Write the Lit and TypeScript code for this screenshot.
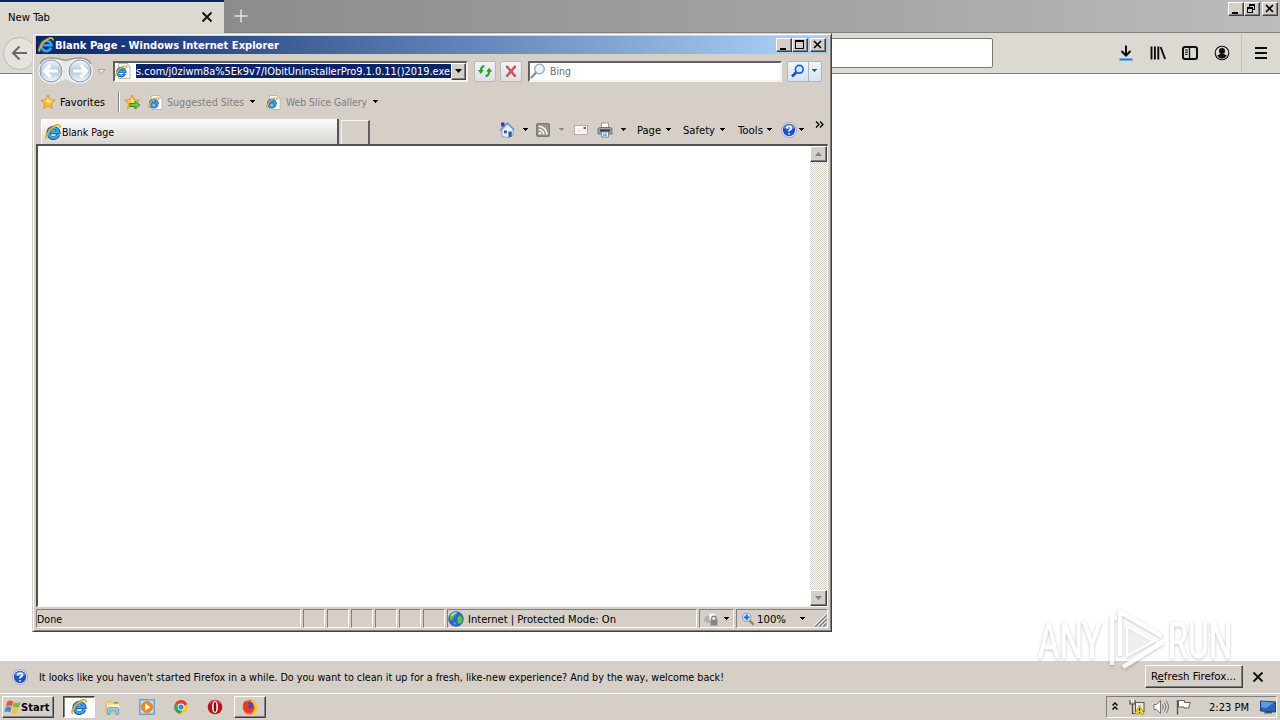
import { LitElement, html, svg, css } from "lit";
import { customElement, property } from "lit/decorators.js";

// One line of UI text, fitted to the width the classic shell font gives it.
@customElement("ui-label")
export class UiLabel extends LitElement {
  @property() text = "";
  @property({ type: Number }) w = 40;
  @property({ type: Number }) key = -1;

  static styles = css`
    :host {
      display: block;
      flex: none;
    }
    svg {
      display: block;
      overflow: visible;
    }
    text {
      font-family: "DejaVu Sans Condensed", "DejaVu Sans", sans-serif;
      font-stretch: condensed;
      font-size: 11px;
      fill: currentColor;
      white-space: pre;
    }
    .key {
      text-decoration: underline;
    }
  `;

  render() {
    const k = this.key;
    const body =
      k < 0
        ? this.text
        : svg`${this.text.slice(0, k)}<tspan class="key">${this.text[k]}</tspan>${this.text.slice(k + 1)}`;
    return html`<svg width=${this.w} height="12">
      <text x="0" y="10" textLength=${this.w} lengthAdjust="spacingAndGlyphs">${body}</text>
    </svg>`;
  }
}

const ieLogo = svg`
  <path d="M13.300 10.800A5.200 5.200 0 1 1 13.600 8.300H5" fill="none" stroke="#1258a8" stroke-width="3.800"/>
  <path d="M13 10.900A5 5 0 1 1 13.400 8.300H5.400" fill="none" stroke="#3fa9ec" stroke-width="2"/>
  <path d="M1.600 14.800C-.6 12 4.500 4.500 9.500 2C13 .2 15.800 .6 15 3.600" fill="none" stroke="#d99a16" stroke-width="1.600"/>
  <path d="M2 14.200C1 11.500 5 5.500 9.500 2.700C12.300 1 14.500 1 14.600 2.600" fill="none" stroke="#ffe25c" stroke-width=".7"/>`;

const star = svg`<path d="M8 1l2.100 4.700 5.100.5-3.900 3.400 1.200 5-4.500-2.700-4.500 2.700 1.200-5L.8 6.200l5.100-.5z" fill="#fdbe35" stroke="#cf8f20" stroke-width=".8"/>
  <path d="M8 3l1.400 3.500 3.600.3-3 2.200-6-2.200 2.600-.3z" fill="#ffe58a"/>`;

const helpBall = svg`
  <circle cx="8" cy="8" r="7.500" fill="#eef2fb" stroke="#8d9cc0" stroke-width=".8"/>
  <circle cx="8" cy="8" r="6.200" fill="#2450b8"/>
  <path d="M3 6A5.300 5.300 0 0 1 13 6Q8 8.500 3 6z" fill="#6f95e2"/>
  <path d="M5.800 6.400Q5.900 4.200 8.100 4.200T10.300 6.200Q10.300 7.400 8.900 8T8.100 9.700M8.100 10.900V12.500" fill="none" stroke="#fff" stroke-width="1.600"/>`;

const pageSheet = svg`
  <path d="M3.500.5h9l2.500 3v12H3.500z" fill="#fff" stroke="#b5b5b5"/>
  <path d="M12 .8v3h3" fill="#e8e8e8" stroke="#b5b5b5" stroke-width=".7"/>
  <g transform="translate(0 2.500) scale(.74)">${ieLogo}</g>`;

const icons: Record<string, unknown> = {
  ie: ieLogo,
  page: pageSheet,
  star,
  starAdd: svg`${star}<path d="M6 9.500h5V7l4.800 4-4.800 4v-2.500H6z" fill="#63d148" stroke="#218a1c" stroke-width=".9"/>`,
  help: helpBall,
  refresh: svg`
    <path d="M7.500 3.200Q4 3 3.900 8" fill="none" stroke="#2b9e2b" stroke-width="2.200"/>
    <path d="M.8 7h6L3.800 11z" fill="#2b9e2b"/>
    <path d="M8.500 13Q12 13 12.100 8" fill="none" stroke="#2b9e2b" stroke-width="2.200"/>
    <path d="M9.200 8.800h6L12.200 4.800z" fill="#2b9e2b"/>`,
  stop: svg`<path d="M3.500 3l9 10.500M12.500 3l-9 10.500" stroke="#a3313a" stroke-width="2.200"/>
    <path d="M3.700 3.200l8.600 10M12.300 3.200l-8.600 10" stroke="#e0606b" stroke-width="1.100"/>`,
  lensGray: svg`<path d="M1 15l5-5.500" stroke="#8a8a8a" stroke-width="2.200"/>
    <circle cx="9.500" cy="6" r="4.800" fill="#e9f3fa" stroke="#9a9fa5" stroke-width="1.300"/>
    <path d="M7 5Q8 3 10 3" stroke="#fff" fill="none"/>`,
  lensBlue: svg`<path d="M2 13.500l4.500-4.500" stroke="#1c4fd0" stroke-width="2.600"/>
    <circle cx="9.300" cy="6.300" r="3.900" fill="#d8ecff" stroke="#1c5fe0" stroke-width="1.700"/>`,
  home: svg`<path d="M3 7.500v7l6 1.200 5-2.200V7L8.500 2z" fill="#e4eefb" stroke="#7891bd" stroke-width=".8"/>
    <path d="M1 8.500L8.500 1l6.800 7" fill="none" stroke="#6e8cc4" stroke-width="1.300"/>
    <path d="M2 .5h3.500v3L2.500 5z" fill="#2a37b8"/>
    <path d="M9.500 9.500h3.200v5l-3.200.8z" fill="#28579a"/><path d="M5 8.500h2.800v2.800H5z" fill="#3d4f70"/>`,
  feed: svg`<rect x="1" y="1" width="14" height="14" rx="2" fill="#7d7b79"/>
    <rect x="2.500" y="2.500" width="11" height="11" rx="1" fill="#9a9896"/>
    <circle cx="5" cy="11.300" r="1.400" fill="#fff"/>
    <path d="M3.700 7.500a5 5 0 0 1 5 5M3.700 4.300a8.200 8.200 0 0 1 8.200 8.200" fill="none" stroke="#fff" stroke-width="1.600"/>`,
  mail: svg`<rect x="1.500" y="3.500" width="13" height="9" fill="#fafafa" stroke="#b0aeac"/>
    <path d="M4 7h4M4 9h6" stroke="#ddd"/><rect x="10.500" y="5" width="2.500" height="2" fill="#d8343c"/>`,
  printer: svg`<path d="M4.500 1h7v5h-7z" fill="#fff" stroke="#888" stroke-width=".8"/>
    <path d="M1 6.500l2-1h10l2 1V12H1z" fill="#a2a5a8" stroke="#666" stroke-width=".8"/>
    <path d="M3 7.500h10v2H3z" fill="#30353a"/>
    <path d="M4.500 10h7v5h-7z" fill="#f4fbff" stroke="#5c7589" stroke-width=".8"/><path d="M6 11.500h4v2.500H6z" fill="#6fb7d8"/>`,
  globe: svg`<circle cx="8" cy="8" r="7.300" fill="#2b67cf" stroke="#234c8e" stroke-width=".7"/>
    <path d="M3 3Q6 .5 8 2.500L7 5 4.500 7 5 9.500 2 8.500Q1 6 3 3zM9.500 6l3-1.500 2.200 3-.7 3.500-3 2.500-1.500-3zM5 11l3 1-1 2.500z" fill="#55c544"/>
    <path d="M3.500 5Q5 1.500 9 2" fill="none" stroke="#b9e3ff" stroke-width="1.200"/>`,
  privacy: svg`<path d="M.5 9Q4 3.500 8 3l-1 9Q3 12 .5 9z" fill="#b3b1af"/>
    <path d="M5.500 3l5-1 3 3-6 6z" fill="#fff" stroke="#ccc" stroke-width=".6"/>
    <path d="M8.700 9V7.500a2.300 2.300 0 0 1 4.600 0V9" fill="none" stroke="#777" stroke-width="1.200"/>
    <rect x="7.500" y="9" width="7" height="5.500" fill="#858585"/>`,
  zoom: svg`<path d="M9.500 9.500l5 5" stroke="#b47a4a" stroke-width="2.600"/>
    <circle cx="6.500" cy="6" r="4.900" fill="#cfe6fb" stroke="#6e9ed6" stroke-width="1.100"/>
    <path d="M6.500 2.800v6.400M3.300 6h6.400" stroke="#1763c9" stroke-width="2"/>`,
  explorer: svg`<path d="M1 2.500h5l1.500 1.500H14v10H1z" fill="#f2d675" stroke="#d3b45a" stroke-width=".8"/>
    <path d="M2 5.500h12.500v4H2z" fill="#fdf2b8"/><path d="M9 3h4v1.500H9z" fill="#5aa95a"/>
    <path d="M2.500 15.500V9.500q0-1 1-1h9q1 0 1 1v6H11v-3.500H5v3.500z" fill="#8fcaec" stroke="#4f9ac8" stroke-width=".7"/>`,
  player: svg`<rect x=".7" y=".7" width="14.600" height="14.600" fill="#a8cdee" stroke="#5a92ca"/>
    <rect x="2.500" y="2.500" width="11" height="11" fill="#dcebf8"/>
    <circle cx="8" cy="8" r="5.600" fill="#f28a14" stroke="#d46c05" stroke-width=".6"/><path d="M6.200 4.600v6.800L11.300 8z" fill="#fff"/>`,
  chrome: svg`<circle cx="8" cy="8" r="6.800" fill="#fbc926"/>
    <path d="M8 8L2.100 4.600A6.800 6.800 0 0 1 14.300 5.200z" fill="#e03f34"/>
    <path d="M8 8L2.100 4.600A6.800 6.800 0 0 0 7.500 14.800L10.500 9.500z" fill="#35a352"/>
    <circle cx="8" cy="8" r="3.400" fill="#fff"/><circle cx="8" cy="8" r="2.600" fill="#4182e8"/>`,
  opera: svg`<circle cx="8" cy="8" r="7.300" fill="#b81420"/><path d="M2.500 4.500Q8-1.500 13.500 4.500" fill="none" stroke="#e36b6b"/>
    <ellipse cx="8" cy="8" rx="3" ry="5.900" fill="#fff"/><ellipse cx="8" cy="8" rx="1.400" ry="4.900" fill="#8c0c15"/>`,
  firefox: svg`<circle cx="8" cy="8.200" r="7.400" fill="#f7641e"/>
    <path d="M8.500 .3Q15.800 3 15.400 9T9.500 15.500Q13.500 10 8.500 .3z" fill="#ffc928"/>
    <circle cx="7.800" cy="7" r="4" fill="#4a48c0"/>
    <path d="M.8 6Q1.500 3 3.500 1.500L4.500 4l3.500 1.500-2.500 2Q5.500 10 9 9.500q3-1 2.800-3Q14 10 10.500 12.500T3 12.500Q.4 9.500 .8 6z" fill="#f5361f"/>`,
  network: svg`<path d="M1 1v4h5V1M3.500 5v9.500H8" fill="none" stroke="#4a4a4a" stroke-width="1.200"/>
    <path d="M2.300 0v3M4.700 0v3" stroke="#fff"/><rect x="6.500" y="3.500" width="8.500" height="9" fill="#eee" stroke="#555"/>
    <path d="M10.500 6l4.700 9H5.800z" fill="#fbd32a" stroke="#a88712" stroke-width=".7"/><path d="M10.500 9v3M10.500 13v1" stroke="#222" stroke-width="1.200"/>`,
  sound: svg`<path d="M1 5.500h2.500l4-4v13l-4-4H1z" fill="#fff" stroke="#666" stroke-width=".9"/>
    <path d="M9.500 5.500q1.500 2.500 0 5M11.500 3.700q3 4.300 0 8.600M13.500 2q4 6 0 12" fill="none" stroke="#777" stroke-width="1"/>`,
  flag: svg`<path d="M1.500 15.500V1" stroke="#555" stroke-width="1.400"/><path d="M2.500 1.500h6v2h6l-1.500 3 0 2.500H8V8H2.500z" fill="#fff" stroke="#555" stroke-width=".9"/>`,
  monitor: svg`<path d="M.5 2l15 1v10l-15-1z" fill="#2a63bd" stroke="#153f82"/><path d="M1 2.500l13 1L6 9l-5-1z" fill="#5c9ae3"/><path d="M5 13h7v1.500H3.500z" fill="#44536c"/>`,
  windows: svg`<path d="M3 2.500Q6 .5 8.500 2.500L7.300 7Q5 5.300 1.800 7z" fill="#e9532b"/>
    <path d="M9.300 3Q12 4.500 15.500 2.800L14.200 7.500Q11.500 8.700 8.200 7.300z" fill="#7cb83c"/>
    <path d="M1.500 8Q4.500 6.300 7 8L5.700 12.700Q3 11 .3 12.700z" fill="#3b86d8"/>
    <path d="M7.900 8.400Q11 10 14 8.600L12.700 13.200Q9.500 14.700 6.600 13z" fill="#f7c32c"/>`,
  download: svg`<path d="M8 .5v9.500M3.500 6L8 10.500 12.500 6" fill="none" stroke="#0c0c0d" stroke-width="2"/><path d="M1.500 14.500h13" stroke="#0a7fe8" stroke-width="2"/>`,
  library: svg`<path d="M1.500 1.500v13M4.900 1.500v13M8.300 1.500v13M10.600 2l4.500 12" stroke="#0c0c0d" stroke-width="1.900"/>`,
  sidebar: svg`<rect x="1" y="2" width="14" height="12" rx="2" fill="none" stroke="#0c0c0d" stroke-width="2"/>
    <path d="M7.500 2v12" stroke="#0c0c0d" stroke-width="1.300"/><path d="M3 5h3M3 7.200h3M3 9.400h2.500" stroke="#0c0c0d"/>`,
  account: svg`<circle cx="8" cy="8" r="6.800" fill="none" stroke="#0c0c0d" stroke-width="1.100"/>
    <circle cx="8" cy="6" r="3" fill="#0c0c0d"/><path d="M3.200 10.500Q5 9.500 6 9h4q1 .5 2.800 1.500Q11 13.600 8 13.600T3.200 10.500z" fill="#0c0c0d"/>`,
  menu: svg`<path d="M2 3h12M2 8h12M2 13h12" stroke="#0c0c0d" stroke-width="2"/>`,
  cross: svg`<path d="M3.500 3.500l9 9M12.500 3.500l-9 9" stroke="#111" stroke-width="1.900"/>`,
  plus: svg`<path d="M8 1.500v13M1.500 8h13" stroke="#e4e4e4" stroke-width="1.500"/>`,
  chevrons: svg`<path d="M5.500 6.500L8 4l2.500 2.500M5.500 10.500L8 8l2.500 2.500" fill="none" stroke="#000" stroke-width="1.400"/>`,
};

const icon = (name: string, size = 16) =>
  html`<svg class="icon" width=${size} height=${size} viewBox="0 0 16 16">${icons[name]}</svg>`;

const arrow = (tone = "#000") =>
  html`<svg class="icon" width="6" height="4" shape-rendering="crispEdges"><path d="M0 0h5L2.500 3z" fill=${tone}/></svg>`;

const label = (text: string, w: number) => html`<ui-label .text=${text} .w=${w}></ui-label>`;

const captionGlyphs: Record<string, unknown> = {
  min: svg`<path d="M3 9h6v2H3z"/>`,
  max: svg`<path fill-rule="evenodd" d="M2 1h9v9H2zM3 3v6h7V3z"/>`,
  restore: svg`<path fill-rule="evenodd" d="M4 1h6v6H8v3H2V4h2zM5 3v1h3v2h1V3zM3 6v3h4V6z"/>`,
  close: svg`<path d="M3 2l7 7M10 2L3 9" stroke="#000" stroke-width="1.600"/>`,
};

const captionButtons = (middle: string) => html`
  <div class="caption">
    ${["min", middle, "close"].map(
      (n) => html`<div class="cap raised ${n}"><svg width="12" height="11">${captionGlyphs[n]}</svg></div>`
    )}
  </div>
`;

@customElement("app-root")
export class AppRoot extends LitElement {
  static styles = css`
    :host {
      --face: #d5cfc8;
      display: block;
      width: 1280px;
      height: 720px;
      overflow: hidden;
      position: relative;
      background: #fff;
      color: #000;
      font: 11px "DejaVu Sans Condensed", "DejaVu Sans", sans-serif;
    }
    * {
      box-sizing: border-box;
    }
    .icon {
      display: block;
      flex: none;
    }
    .raised {
      background: var(--face);
      border: 1px solid;
      border-color: #fff #404040 #404040 #fff;
      box-shadow: inset -1px -1px #808080;
    }
    .sunken {
      border: 1px solid;
      border-color: #808080 #fff #fff #808080;
    }
    .caption {
      display: flex;
    }
    .cap {
      width: 16px;
      height: 14px;
    }
    .cap svg {
      display: block;
    }
    .cap.close {
      margin-left: 2px;
    }

    /* Firefox */
    .firefox {
      display: flex;
      flex-direction: column;
      height: 693px;
    }
    .tabstrip {
      display: flex;
      height: 33px;
      background: linear-gradient(90deg, #808080, #8c8c8c 18%, #a4a4a4 65%, #bcbcbc);
    }
    .fx-tab {
      width: 224px;
      height: 33px;
      border-top: 2px solid #0a246a;
      background: #dcd8d2;
      display: flex;
      align-items: center;
      justify-content: space-between;
      padding: 0 9px 2px 8px;
    }
    .new-tab {
      margin: 8px 0 0 9px;
      flex: 1;
    }
    .tabstrip .caption {
      padding: 2px 2px 0 0;
    }
    .strip-rest {
      flex: 1;
      display: flex;
      border-bottom: 1px solid #808080;
    }
    .fx-bar {
      height: 41px;
      background: #dcd8d2;
      border-bottom: 1px solid #808080;
      display: flex;
      align-items: center;
    }
    .fx-back {
      width: 33px;
      height: 33px;
      margin-left: 3px;
      border: 1px solid #bdb9b3;
      border-radius: 50%;
      background: #e6e3de;
      display: grid;
      place-items: center;
    }
    .fx-url {
      width: 920px;
      height: 30px;
      margin: 0 125px 0 37px;
      border: 1px solid #777;
      border-radius: 2px;
      background: #fff;
    }
    .fx-icons {
      display: flex;
      gap: 16px;
    }
    .fx-sep {
      width: 1px;
      height: 38px;
      margin: 0 11px;
      background: #c6c2bc;
    }
    .fx-page {
      flex: 1;
    }
    .notice {
      height: 32px;
      background: var(--face);
      display: flex;
      align-items: center;
      padding: 0 14px 0 12px;
    }
    .notice ui-label {
      margin-left: 11px;
    }
    .notice button {
      width: 98px;
      height: 23px;
      margin: 0 7px 2px auto;
      padding: 0;
      display: grid;
      place-items: center;
    }
    .notice button ui-label {
      margin: 0 2px 0 0;
    }

    /* Taskbar */
    .taskbar {
      height: 27px;
      background: var(--face);
      border-top: 1px solid #fff;
      display: flex;
      align-items: center;
      padding: 1px 3px 1px 2px;
    }
    .start {
      width: 52px;
      height: 22px;
      display: flex;
      align-items: center;
      padding-left: 1px;
    }
    .start span {
      font: bold 11px "DejaVu Sans Condensed", "DejaVu Sans", sans-serif;
      font-stretch: condensed;
      letter-spacing: 0.1px;
    }
    .task {
      width: 32px;
      height: 22px;
      display: grid;
      place-items: center;
    }
    .task.pressed {
      margin-left: 9px;
      background: #fff;
      border: 1px solid;
      border-color: #404040 #fff #fff #404040;
      box-shadow: inset 1px 1px #808080;
    }
    .pins {
      display: flex;
      gap: 18px;
      margin: 0 11px 0 10px;
    }
    .tray {
      width: 171px;
      height: 22px;
      margin-left: auto;
      display: flex;
      align-items: center;
    }
    .tray .icon:nth-of-type(2) {
      margin-left: 6px;
    }
    .tray .icon:nth-of-type(3) {
      margin: 0 7px 0 8px;
    }
    .tray ui-label {
      margin: 0 11px 0 17px;
    }

    /* Internet Explorer window, floating over Firefox */
    .ie {
      position: absolute;
      left: 32px;
      top: 33px;
      width: 800px;
      height: 599px;
      padding: 2px 3px 2px 3px;
      background: var(--face);
      border: 1px solid;
      border-color: var(--face) #404040 #404040 var(--face);
      box-shadow: inset 1px 1px #fff, inset -1px -1px #808080;
      display: flex;
      flex-direction: column;
    }
    .ie-title {
      flex: none;
      height: 18px;
      display: flex;
      align-items: center;
      padding: 0 2px;
      background: linear-gradient(90deg, #0a246a, #a6caf0 94%);
    }
    .ie-title text {
      font: bold 11px "DejaVu Sans Condensed", "DejaVu Sans", sans-serif;
      fill: #fff;
    }
    .ie-title .name {
      margin-left: 1px;
      flex: 1;
    }
    .nav {
      flex: none;
      height: 34px;
      display: flex;
      align-items: center;
      padding-left: 1px;
    }
    .address,
    .search {
      height: 21px;
      background: #fff;
      border: 2px solid;
      border-color: #606060 #f4f2ee #f4f2ee #606060;
      display: flex;
      align-items: center;
    }
    .address {
      width: 355px;
      margin-left: 6px;
    }
    .address .sel {
      width: 315px;
      height: 14px;
      margin-left: 5px;
      background: #0a246a;
      color: #fff;
      overflow: hidden;
      display: flex;
      align-items: center;
    }
    .address .drop {
      width: 15px;
      height: 17px;
      margin-left: auto;
      display: grid;
      place-items: center;
    }
    .search {
      width: 254px;
      margin-left: 6px;
      color: #6d6d6d;
      gap: 4px;
    }
    .tool {
      width: 22px;
      height: 21px;
      border: 1px solid #b9b9b9;
      border-radius: 2px;
      background: linear-gradient(#f2f3f5, #dedfe2);
      display: grid;
      place-items: center;
    }
    .address + .tool {
      margin: 0 4px 0 6px;
    }
    .go {
      width: 35px;
      height: 21px;
      margin-left: 5px;
      border: 1px solid #a9b6c9;
      border-radius: 2px;
      background: linear-gradient(#f2f5fa, #d9e2ee);
      display: grid;
      grid-template-columns: 20px 1fr;
      place-items: center;
    }
    .go .more {
      height: 19px;
      width: 13px;
      border-left: 1px solid #a9b6c9;
      display: grid;
      place-items: center;
    }
    .favs {
      flex: none;
      height: 28px;
      display: grid;
      grid-template-columns: 20px 58px 6px 24px 19px 83px 16px 20px 87px 8px;
      align-items: center;
      padding-left: 4px;
      color: #808080;
    }
    .favs .strong {
      color: #000;
    }
    .favs hr {
      width: 2px;
      height: 20px;
      margin: 0;
      border: 0;
      border-left: 1px solid #808080;
      background: #fff;
    }
    .tabs {
      flex: none;
      height: 28px;
      display: flex;
      align-items: flex-end;
      padding-left: 5px;
    }
    .tab {
      width: 298px;
      height: 25px;
      background: linear-gradient(#fdfdfc, #d8d5ce);
      border-right: 2px solid #555;
      border-left: 1px solid #fff;
      display: flex;
      align-items: center;
      gap: 1px;
      padding-left: 3px;
    }
    .tab-new {
      width: 29px;
      height: 24px;
      margin-left: 2px;
      border: 1px solid #f4f2ee;
      border-right: 2px solid #606060;
      border-bottom: 0;
    }
    .commands {
      height: 28px;
      margin-left: 129px;
      display: grid;
      grid-template-columns: 24px 12px 24px 14px 24px 24px 16px 29px 17px 37px 18px 29px 14px 18px 16px 10px;
      align-items: center;
    }
    .commands .overflow {
      margin-top: -12px;
    }
    .view {
      flex: 1;
      min-height: 0;
      display: flex;
      background: #fff;
      border: 2px solid;
      border-color: #505050 #f6f5f2 #f6f5f2 #505050;
      border-right-width: 1px;
      border-bottom-width: 1px;
    }
    .scroll {
      width: 17px;
      margin-left: auto;
      display: flex;
      flex-direction: column;
      justify-content: space-between;
      background: repeating-conic-gradient(#fff 0 25%, var(--face) 0 50%) 0 0 / 2px 2px;
    }
    .scroll div {
      height: 16px;
      display: grid;
      place-items: center;
    }
    .status {
      flex: none;
      height: 22px;
      padding: 2px 0 0;
      display: grid;
      grid-template-columns: 265px repeat(6, 22px) 250px 35px 1fr;
      column-gap: 2px;
    }
    .status > div {
      height: 19px;
      display: flex;
      align-items: center;
    }
    .status .zone {
      gap: 4px;
    }
    .status .priv {
      gap: 5px;
      padding-left: 3px;
    }
    .status .level {
      display: grid;
      grid-template-columns: 16px 43px 1fr 13px;
      padding-left: 4px;
    }
    .level .grip {
      align-self: flex-end;
    }

    /* Watermark laid over page and notice bar */
    .mark {
      position: absolute;
      left: 1030px;
      top: 600px;
      overflow: visible;
      filter: drop-shadow(0 1px 1.5px rgba(0, 0, 0, 0.3));
      opacity: 0.8;
    }
    .mark text {
      font: 400 50px Roboto, sans-serif;
      fill: #fff;
      stroke: #fff;
    }
  `;

  private renderFirefox() {
    return html`
      <div class="firefox">
        <div class="tabstrip">
          <div class="fx-tab">${label("New Tab", 42)} ${icon("cross")}</div>
          <div class="strip-rest">
            <div class="new-tab">${icon("plus")}</div>
            ${captionButtons("restore")}
          </div>
        </div>
        <div class="fx-bar">
          <div class="fx-back">
            <svg width="18" height="16">
              <path d="M16 8H2M8.500 1.500L2 8l6.500 6.500" fill="none" stroke="#6a6865" stroke-width="2" />
            </svg>
          </div>
          <div class="fx-url"></div>
          <div class="fx-icons">${["download", "library", "sidebar", "account"].map((n) => icon(n))}</div>
          <div class="fx-sep"></div>
          ${icon("menu")}
        </div>
        <div class="fx-page"></div>
        <div class="notice">
          ${icon("help")}
          ${label(
            "It looks like you haven't started Firefox in a while. Do you want to clean it up for a fresh, like-new experience? And by the way, welcome back!",
            685
          )}
          <button class="raised"><ui-label text="Refresh Firefox..." .w=${85} .key=${1}></ui-label></button>
          ${icon("cross")}
        </div>
      </div>
    `;
  }

  private renderTaskbar() {
    return html`
      <div class="taskbar">
        <div class="start raised">${icon("windows", 17)}<span>Start</span></div>
        <div class="task pressed">${icon("ie")}</div>
        <div class="pins">
          ${["explorer", "player", "chrome", "opera"].map((n) => icon(n))}
        </div>
        <div class="task raised">${icon("firefox")}</div>
        <div class="tray sunken">
          ${icon("chevrons")} ${icon("network")} ${icon("sound")} ${icon("flag")}
          ${label("2:23 PM", 40)} ${icon("monitor")}
        </div>
      </div>
    `;
  }

  private renderNav() {
    return html`
      <div class="nav">
        <svg class="icon" width="70" height="30">
          <defs>
            <linearGradient id="orb" x2="0" y2="1">
              <stop offset="0" stop-color="#f4f8fb" />
              <stop offset=".5" stop-color="#b4c8dc" />
              <stop offset="1" stop-color="#edf7fd" />
            </linearGradient>
          </defs>
          <path d="M14 2.500Q22 3 28.500 5 35 3 43 2.500V27Q35 27 28.500 23 22 27 14 27z" fill="#e9e8e8" />
          <circle cx="14" cy="15" r="12.700" fill="#f1f3f5" />
          <circle cx="43" cy="15" r="12.700" fill="#f1f3f5" />
          <path d="M3 8Q6 2 14 2 22 2 28.500 4.500 35 2 43 2 51 2 54 8" fill="none" stroke="#98989e" stroke-width="1.500" />
          <circle cx="14" cy="15" r="11" fill="url(#orb)" stroke="#8295aa" />
          <circle cx="43" cy="15" r="11" fill="url(#orb)" stroke="#8295aa" />
          <path d="M21 15H8M13.500 9L7.500 15l6 6M36 15h13M43.500 9l6 6-6 6" fill="none" stroke="#fff" stroke-width="3.200" />
          <path d="M61 13.500h7L64.500 18z" fill="#e9e7e3" stroke="#aaa69f" />
        </svg>
        <div class="address">
          ${icon("page")}
          <div class="sel">${label("s.com/j0ziwm8a%5Ek9v7/IObitUninstallerPro9.1.0.11()2019.exe", 314)}</div>
          <div class="drop raised">
            <svg width="7" height="4"><path d="M0 0h7L3.500 4z" /></svg>
          </div>
        </div>
        <div class="tool">${icon("refresh")}</div>
        <div class="tool">${icon("stop")}</div>
        <div class="search">${icon("lensGray")} ${label("Bing", 21)}</div>
        <div class="go">
          ${icon("lensBlue")}
          <div class="more">${arrow("#1c5fb0")}</div>
        </div>
      </div>
    `;
  }

  private renderIE() {
    return html`
      <div class="ie">
        <div class="ie-title">
          ${icon("ie")}
          <svg class="name" height="12">
            <text x="0" y="10" textLength="224" lengthAdjust="spacingAndGlyphs">Blank Page - Windows Internet Explorer</text>
          </svg>
          ${captionButtons("max")}
        </div>
        ${this.renderNav()}
        <div class="favs">
          ${icon("star")}
          <div class="strong">${label("Favorites", 45)}</div>
          <hr />
          ${icon("starAdd")} ${icon("page", 15)} ${label("Suggested Sites", 77)} ${arrow()}
          ${icon("page", 15)} ${label("Web Slice Gallery", 81)} ${arrow()}
        </div>
        <div class="tabs">
          <div class="tab">${icon("ie")} ${label("Blank Page", 52)}</div>
          <div class="tab-new"></div>
          <div class="commands">
            ${icon("home")} ${arrow()} ${icon("feed")} ${arrow("#8b8b8b")} ${icon("mail")} ${icon("printer")}
            ${arrow()} ${label("Page", 24)} ${arrow()} ${label("Safety", 32)} ${arrow()}
            ${label("Tools", 25)} ${arrow()} ${icon("help")} ${arrow()}
            <svg class="icon overflow" width="9" height="7">
              <path d="M1 .5l3 3-3 3M5 .5l3 3-3 3" fill="none" stroke="#000" stroke-width="1.300" />
            </svg>
          </div>
        </div>
        <div class="view">
          <div class="scroll">
            <div class="raised"><svg width="7" height="4"><path d="M0 4h7L3.500 0z" fill="#808080" /></svg></div>
            <div class="raised"><svg width="7" height="4"><path d="M0 0h7L3.500 4z" fill="#808080" /></svg></div>
          </div>
        </div>
        <div class="status">
          <div class="sunken">${label("Done", 25)}</div>
          ${Array.from({ length: 6 }, () => html`<div class="sunken"></div>`)}
          <div class="sunken zone">${icon("globe")} ${label("Internet | Protected Mode: On", 148)}</div>
          <div class="sunken priv">${icon("privacy")} ${arrow()}</div>
          <div class="sunken level">
            ${icon("zoom", 14)} ${label("100%", 29)} ${arrow()}
            <svg class="icon grip" width="13" height="13">
              <path d="M1 13L13 1M5 13l8-8M9 13l4-4" stroke="#808080" stroke-width="1.400" />
              <path d="M0 12L12 0M4 12l8-8M8 12l4-4" stroke="#fff" stroke-width=".8" />
            </svg>
          </div>
        </div>
      </div>
    `;
  }

  render() {
    return html`
      ${this.renderFirefox()} ${this.renderTaskbar()} ${this.renderIE()}
      <svg class="mark" width="210" height="80">
        <text x="8" y="58" textLength="64" lengthAdjust="spacingAndGlyphs">ANY</text>
        <text x="138" y="58" textLength="64" lengthAdjust="spacingAndGlyphs">RUN</text>
        <path d="M87 18H82V65M90 56V12L132 36M133 42L93 67" fill="none" stroke="#fff" stroke-width="4.500" />
        <path d="M97 56V26L124 41z" fill="#fff" fill-opacity=".5" stroke="#fff" stroke-width="2.500" />
      </svg>
    `;
  }
}
